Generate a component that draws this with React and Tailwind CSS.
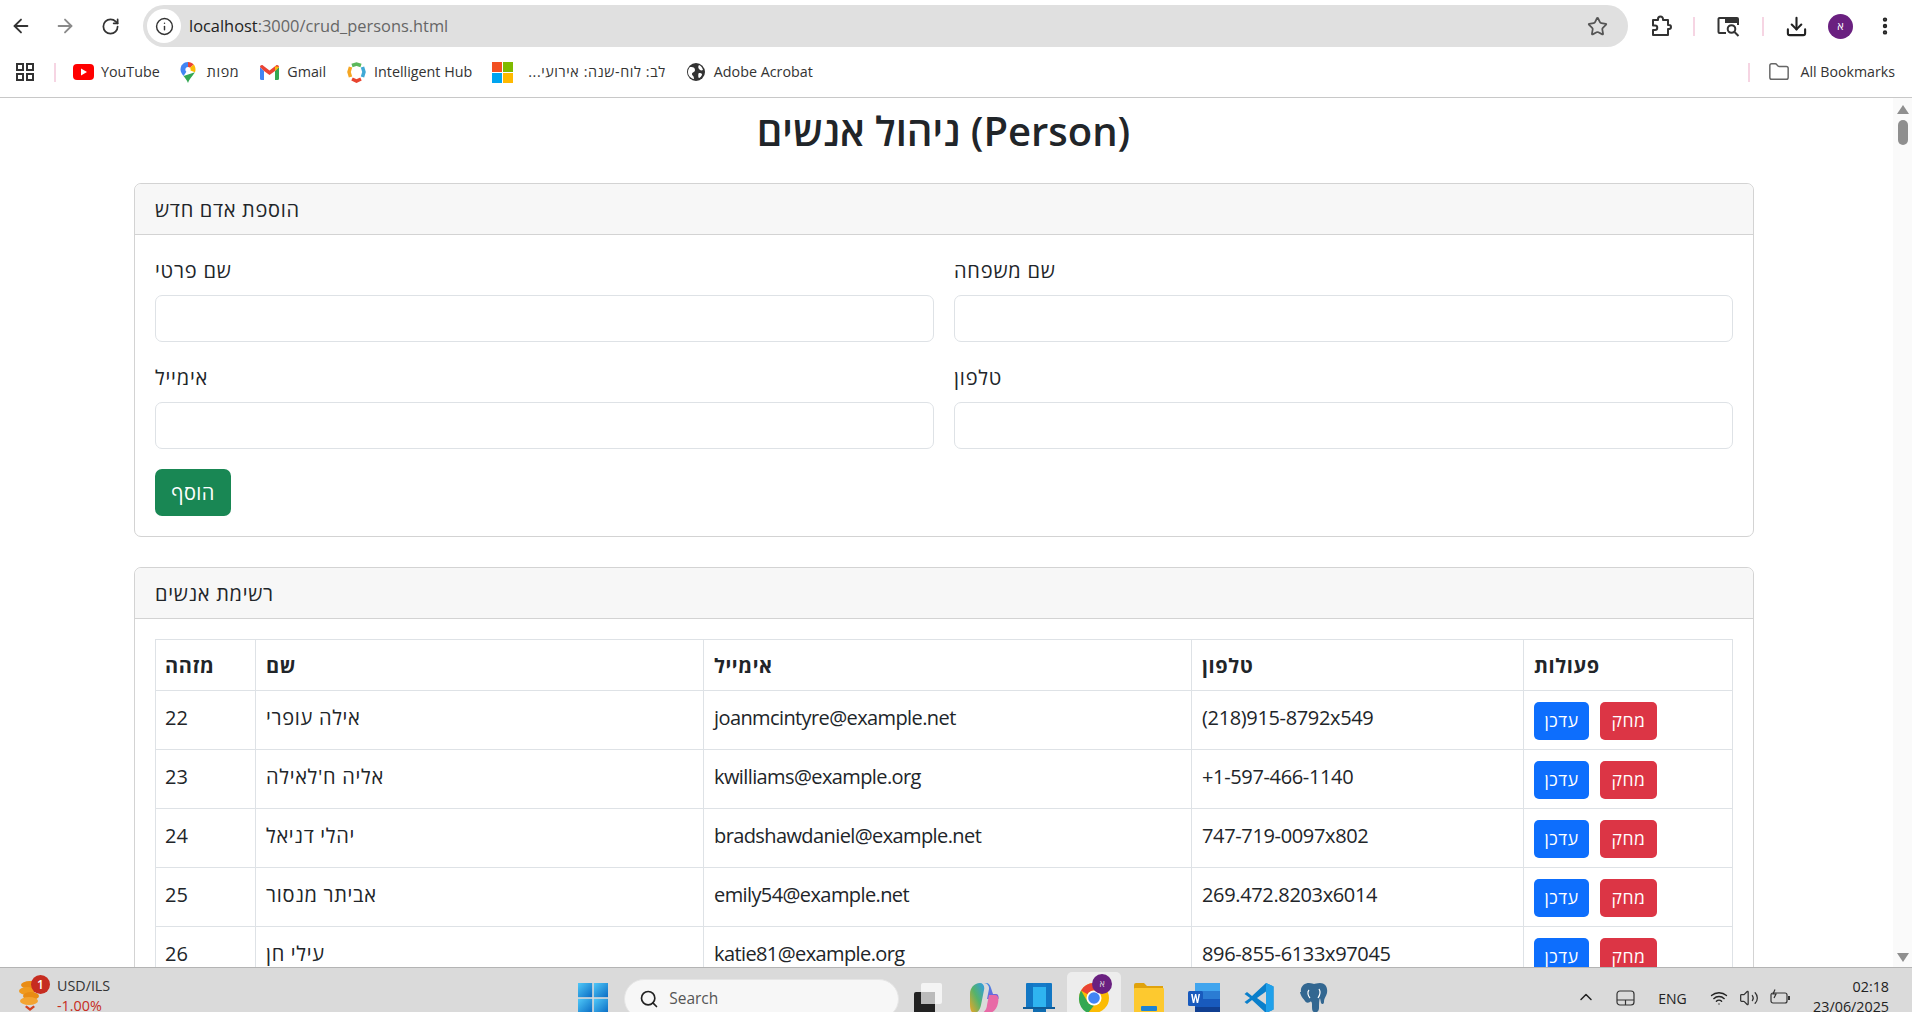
import React from "react";
import { ArrowLeft, ArrowRight, RotateCw, Info, Star, Download, EllipsisVertical, Folder, Search, ChevronUp, Wifi, Volume2 } from "lucide-react";

const FONT = "[font-family:'Open_Sans','Noto_Sans','DejaVu_Sans',sans-serif]";

const people = [
  ["22", "אילה עופרי", "joanmcintyre@example.net", "(218)915-8792x549"],
  ["23", "אליה ח'לאילה", "kwilliams@example.org", "+1-597-466-1140"],
  ["24", "יהלי דניאל", "bradshawdaniel@example.net", "747-719-0097x802"],
  ["25", "אביתר מנסור", "emily54@example.net", "269.472.8203x6014"],
  ["26", "עילי חן", "katie81@example.org", "896-855-6133x97045"],
];

const CELL_STYLE = ["pl-[9px]", "tracking-[0.7px]", "tracking-[-0.6px]", "tracking-[-0.35px]"];

function Divider({ className = "" }) {
  return <div className={`w-[2px] h-[19px] bg-[#f6d5e3] shrink-0 ${className}`} />;
}

function Bookmark({ icon, label, className = "", textClass = "" }) {
  return (
    <div className={`flex items-center shrink-0 ${className}`}>
      {icon}
      <span className={`text-[14.3px] text-[#333] whitespace-nowrap ${textClass}`}>{label}</span>
    </div>
  );
}

const AppsIcon = () => (
  <svg width="20" height="20" viewBox="0 0 20 20" fill="none" stroke="#333" strokeWidth="2"><rect x="2" y="2" width="6" height="6" /><rect x="12" y="2" width="6" height="6" /><rect x="2" y="12" width="6" height="6" /><rect x="12" y="12" width="6" height="6" /></svg>
);
const YouTubeIcon = () => (
  <svg width="21" height="16" viewBox="0 0 21 16"><rect width="21" height="16" rx="4" fill="#f00" /><path d="M8 4.5v7l6-3.5z" fill="#fff" /></svg>
);
const MapsIcon = () => (
  <svg width="16" height="21" viewBox="0 0 16 21"><path d="M8 0C3.6 0 0.5 3.2 0.5 7.5 0.5 10 2 12 3.5 14L8 7.5z" fill="#4285f4" /><path d="M8 0c2.3 0 4.3 1 5.7 2.6L8 7.5z" fill="#ea4335" /><path d="M13.7 2.6c1.1 1.3 1.8 3 1.8 4.9 0 1-.2 1.8-.6 2.7L8 7.5z" fill="#fbbc04" /><path d="M3.5 14L14.9 10.2C13.6 13 10 15.5 8 21 7 18 5 16 3.5 14z" fill="#34a853" /><circle cx="8" cy="7.5" r="2.6" fill="#fff" /></svg>
);
const GmailIcon = () => (
  <svg width="19" height="15" viewBox="0 0 19 15"><path d="M0 2v11.5A1.5 1.5 0 0 0 1.500 15H4V6z" fill="#4285f4" /><path d="M15 6v9h2.500a1.500 1.500 0 0 0 1.500-1.500V2z" fill="#34a853" /><path d="M0 2C0 .5 1.800-.5 3 .5L9.500 5.500 16 .5c1.200-1 3 0 3 1.500L15 6 9.500 10 4 6z" fill="#ea4335" /><path d="M15 1.200 19 2 15 6z" fill="#fbbc04" /></svg>
);
const HubIcon = () => (
  <svg width="19" height="21" viewBox="0 0 19 21" fill="none" strokeWidth="3.500"><path d="M5 3.500 9.500 2 14 3.500" stroke="#5cb85c" /><path d="M15.500 5 17 10 15.500 15" stroke="#3fa9d6" /><path d="M14 17 9.500 19 5 17" stroke="#e8442e" /><path d="M3.500 15 2 10 3.500 5" stroke="#f5a623" /></svg>
);
const MsIcon = () => (
  <svg width="21" height="21" viewBox="0 0 21 21"><rect width="10" height="10" fill="#f25022" /><rect x="11" width="10" height="10" fill="#7fba00" /><rect y="11" width="10" height="10" fill="#00a4ef" /><rect x="11" y="11" width="10" height="10" fill="#ffb900" /></svg>
);
const GlobeDark = () => (
  <svg width="18" height="18" viewBox="0 0 18 18"><circle cx="9" cy="9" r="9" fill="#333" /><path d="M3 4c3-.5 5 .5 5 3S5 9 5 11s2 1 2 5c-3-.5-6-3-6-7 0-2 .8-3.800 2-5zM12 2c2 1 3 2 4 5-2 1-3 0-4-1s-1-3 0-4zM12 10c2 0 3 .5 3 1.500s-2 3.500-3 3.500-1-5 0-5z" fill="#fff" /></svg>
);
const PuzzleIcon = () => (
  <svg width="22" height="22" viewBox="0 0 22 22" fill="none" stroke="#333" strokeWidth="2" strokeLinejoin="round"><path d="M3 5h5V4a2.500 2.500 0 0 1 5 0v1h5v5h1a2 2 0 0 1 0 4h-1v6H3v-5h2a2.200 2.200 0 0 0 0-4.500H3z" /></svg>
);
const TabSearchIcon = () => (
  <svg width="23" height="21" viewBox="0 0 23 21" fill="none" stroke="#333" strokeWidth="2"><path d="M9 2H2.500a1 1 0 0 0-1 1v13a1 1 0 0 0 1 1H9" /><path d="M9 2h11a1 1 0 0 1 1 1v3H9z" fill="#333" /><path d="M21 6v3" /><circle cx="14.500" cy="13" r="3.800" /><path d="M17.500 16 21.500 20" /></svg>
);
const TouchpadIcon = () => (
  <svg width="19" height="16" viewBox="0 0 19 16" fill="none" stroke="#333" strokeWidth="1.200"><rect x="1" y="1" width="17" height="14" rx="3" /><path d="M1 10h17M9.500 10v5" /></svg>
);
const BatteryIcon = () => (
  <svg width="21" height="16" viewBox="0 0 21 16" fill="none" stroke="#333" strokeWidth="1.200"><rect x="1" y="4" width="16" height="10" rx="2" /><path d="M19 7v4" strokeWidth="2" /><path d="M5 0.500 3 5h3L4 9" /></svg>
);
const CoinsIcon = () => (
  <svg width="24" height="34" viewBox="0 0 24 34"><ellipse cx="12" cy="7" rx="9" ry="4" fill="#e98c14" /><ellipse cx="9" cy="13" rx="8" ry="4" fill="#f09a1e" /><ellipse cx="13" cy="18" rx="8" ry="4" fill="#e98c14" /><ellipse cx="11" cy="23" rx="9" ry="4" fill="#f3a431" /><path d="M7 29l5 4 5-4-1.500-1.500L12 30l-3.500-2.500z" fill="#d3401f" /></svg>
);
const WindowsIcon = () => (
  <svg width="30" height="30" viewBox="0 0 30 30"><defs><linearGradient id="w" x1="0" y1="0" x2="1" y2="1"><stop offset="0" stopColor="#4fc8f8" /><stop offset="1" stopColor="#0a6cc4" /></linearGradient></defs><rect x="0" y="0" width="14.200" height="14.200" fill="url(#w)" /><rect x="15.800" y="0" width="14.200" height="14.200" fill="url(#w)" /><rect x="0" y="15.800" width="14.200" height="14.200" fill="url(#w)" /><rect x="15.800" y="15.800" width="14.200" height="14.200" fill="url(#w)" /></svg>
);
const TaskViewIcon = () => (
  <svg width="30" height="32" viewBox="0 0 30 32"><rect x="8" y="1" width="21" height="21" rx="2" fill="#f4f4f4" /><rect x="1" y="10" width="21" height="22" rx="2" fill="#222" /><rect x="8" y="10" width="14" height="12" fill="#bbb" /></svg>
);
const CopilotIcon = () => (
  <svg width="30" height="32" viewBox="0 0 30 32"><defs><linearGradient id="c1" x1="0" y1="0" x2="1" y2="1"><stop offset="0" stopColor="#2f9be8" /><stop offset="1" stopColor="#7f55d8" /></linearGradient><linearGradient id="c2" x1="0" y1="1" x2="1" y2="0"><stop offset="0" stopColor="#f4a522" /><stop offset=".5" stopColor="#55b36a" /><stop offset="1" stopColor="#2f9be8" /></linearGradient></defs><path d="M11 1h6c3 0 4 2 5 5l2 6h3c2 0 3 2 2.500 5L27 17H18l2-10c.5-3-2-6-5-6z" fill="url(#c1)" /><path d="M20 13h6c3 0 4 3 3 8-1 6-5 10-9 10h-8c3 0 6-4 6-8z" fill="#e86aa6" /><path d="M1 12C1 6 5 1 11 1c3 0 5 3 4 7l-3 15c-.7 4-3 8-7 8-3 0-4-4-4-9z" fill="url(#c2)" /></svg>
);
const StoreIcon = () => (
  <svg width="32" height="32" viewBox="0 0 32 32"><rect x="3" y="1" width="26" height="25" rx="1" fill="#1277c4" /><rect x="10" y="1" width="13" height="31" rx="1" fill="#2fb4f0" /><rect x="10" y="1" width="13" height="4" fill="#167bc8" /><rect x="0" y="25" width="32" height="2" fill="#0f5c98" /><rect x="10" y="27" width="13" height="5" fill="#0f6cb0" /></svg>
);
const ChromeIcon = () => (
  <svg width="32" height="32" viewBox="0 0 32 32"><circle cx="16" cy="16" r="15" fill="#fbbc04" /><path d="M16 1a15 15 0 0 1 13 7.500H16a7.500 7.500 0 0 0-6.500 3.750L3 8.500A15 15 0 0 1 16 1z" fill="#ea4335" /><path d="M1 16A15 15 0 0 1 3 8.500l6.500 11.250a7.500 7.500 0 0 0 6.500 3.750L10 31A15 15 0 0 1 1 16z" fill="#34a853" /><circle cx="16" cy="16" r="7.500" fill="#fff" /><circle cx="16" cy="16" r="5.800" fill="#4285f4" /></svg>
);
const FolderApp = () => (
  <svg width="32" height="32" viewBox="0 0 32 32"><path d="M1 3a2 2 0 0 1 2-2h8l3 3h16v6H1z" fill="#e0a20c" /><rect x="1" y="6" width="30" height="26" rx="1" fill="#fdc92f" /><rect x="8" y="24" width="16" height="5" rx="1" fill="#1d83d4" /></svg>
);
const WordIcon = () => (
  <svg width="32" height="32" viewBox="0 0 32 32"><rect x="7" y="1" width="25" height="31" rx="1" fill="#2b7cd3" /><rect x="7" y="1" width="25" height="8" fill="#41a5ee" /><rect x="7" y="17" width="25" height="8" fill="#185abd" /><rect x="7" y="25" width="25" height="7" fill="#103f91" /><rect x="0" y="9" width="15" height="15" rx="1.500" fill="#185abd" /><path d="M3 12l1.800 9h1.500L7.500 15l1.200 6h1.500l1.800-9h-1.500l-1 6-1.200-6H7l-1.300 6-1-6z" fill="#fff" /></svg>
);
const VsCodeIcon = () => (
  <svg width="30" height="32" viewBox="0 0 30 32"><path d="M22 1 29.500 4.500V27.500L22 31 8 18l-5 4-2.500-2 5.500-4-5.500-4L3 10l5 4z" fill="#0a7fcb" /><path d="M22 1 29.500 4.500V27.500L22 31z" fill="#1fa0ea" /><path d="M22 9.500 13 16l9 6.500z" fill="#d8d8d8" /></svg>
);
const PostgresIcon = () => (
  <svg width="30" height="32" viewBox="0 0 30 32"><path d="M2 10C1 4 6 1 10 1c3 0 4 1 5 1s3-1 6-1c5 0 8 4 7 10-1 4-3 5-3 9 0 2-2 3-3 1l-1-5c-1 2-1 6-1 10 0 3-2 5-5 4-2-.5-2-3-2-8 0-2-1-3-2-2-2 1-4 1-5-1-2-3-4-4-5-9z" fill="#336791" /><path d="M10 8c-2 2-1 6 1 8M20 7c2 3 1 6-1 9" stroke="#fff" strokeWidth="1.200" fill="none" /></svg>
);

function Panel({ title, children, className = "" }) {
  return (
    <section className={`ml-[134px] mr-[139px] border border-[#d3d3d3] rounded-[7px] bg-white ${className}`}>
      <div className="h-[51px] px-[20px] pt-[2px] flex items-center bg-[#f7f7f7] border-b border-[#d3d3d3] rounded-t-[7px] text-[20px] tracking-[0.7px] text-[#212529]">
        {title}
      </div>
      {children}
    </section>
  );
}

function Field({ label }) {
  return (
    <div>
      <div className="h-[30px] leading-[32px] mb-[10px] text-[20px] tracking-[0.8px] text-[#212529]">{label}</div>
      <input className="block w-full h-[47px] border border-[#dee2e6] rounded-[7px] bg-white" />
    </div>
  );
}

export default function App() {
  return (
    <div className={`h-[1012px] w-[1912px] overflow-hidden flex flex-col bg-white text-[#212529] ${FONT}`}>
      <header className="h-[98px] shrink-0 border-b border-[#c8c8c8] bg-white">
        <div className="h-[50px] flex items-center pt-[2px]">
          <ArrowLeft className="ml-[10px] shrink-0" size={22} color="#333" strokeWidth={2} />
          <ArrowRight className="ml-[22px] shrink-0" size={22} color="#8a8a8a" strokeWidth={2} />
          <RotateCw className="ml-[25px] shrink-0" size={19} color="#333" strokeWidth={2.200} />
          <div className="ml-[23px] w-[1485px] h-[42px] rounded-full bg-[#e0e0e0] flex items-center pl-[4px] pr-[20px] shrink-0">
            <div className="w-[34px] h-[34px] rounded-full bg-white flex items-center justify-center shrink-0">
              <Info size={19} color="#333" strokeWidth={1.800} />
            </div>
            <div className="ml-[8px] text-[16.400px] flex-1 whitespace-nowrap">
              <span className="text-[#222]">localhost</span><span className="text-[#666]">:3000/crud_persons.html</span>
            </div>
            <Star size={21} color="#555" strokeWidth={2} />
          </div>
          <div className="ml-[22px] shrink-0"><PuzzleIcon /></div>
          <Divider className="ml-[21px]" />
          <div className="ml-[22px] shrink-0"><TabSearchIcon /></div>
          <Divider className="ml-[22px]" />
          <Download className="ml-[21px] shrink-0" size={23} color="#222" strokeWidth={2.200} />
          <div className="ml-[20px] w-[25px] h-[25px] rounded-full bg-[#6a2080] text-white text-[11px] flex items-center justify-center shrink-0">א</div>
          <EllipsisVertical className="ml-[21px] shrink-0" size={22} color="#222" strokeWidth={2.800} />
        </div>
        <div className="h-[47px] flex items-center pb-[3px]">
          <div className="ml-[15px] shrink-0"><AppsIcon /></div>
          <Divider className="ml-[19px]" />
          <Bookmark className="ml-[17px] gap-[7px]" icon={<YouTubeIcon />} label="YouTube" />
          <Bookmark className="ml-[20px] gap-[11px]" icon={<MapsIcon />} label="מפות" textClass="tracking-[0.6px]" />
          <Bookmark className="ml-[21px] gap-[8px]" icon={<GmailIcon />} label="Gmail" />
          <Bookmark className="ml-[21px] gap-[8px]" icon={<HubIcon />} label="Intelligent Hub" />
          <Bookmark className="ml-[20px] gap-[15px]" icon={<MsIcon />} label={<span dir="rtl">לב: לוח-שנה: אירועי...</span>} textClass="tracking-[0.6px]" />
          <Bookmark className="ml-[21px] gap-[9px]" icon={<GlobeDark />} label="Adobe Acrobat" />
          <Divider className="ml-auto" />
          <Folder className="ml-[18px] shrink-0" size={22} color="#666" strokeWidth={1.600} />
          <span className="ml-[10px] mr-[17px] text-[14.200px] whitespace-nowrap text-[#333]">All Bookmarks</span>
        </div>
      </header>

      <div className="flex-1 min-h-0 flex overflow-hidden">
        <main className="flex-1 min-w-0 overflow-hidden">
          <h1 className="text-[40px] leading-[48px] font-semibold text-center mt-[9px] mb-[28px] pr-[6px]">ניהול אנשים (Person)</h1>
          <Panel title="הוספת אדם חדש">
            <div className="p-[20px]">
              <div className="grid grid-cols-2 gap-x-[20px] gap-y-[20px]">
                <Field label="שם פרטי" />
                <Field label="שם משפחה" />
                <Field label="אימייל" />
                <Field label="טלפון" />
              </div>
              <button className="mt-[20px] h-[47px] w-[76px] rounded-[7px] bg-[#198754] text-white text-[20px] tracking-[0.4px] flex items-center justify-center">הוסף</button>
            </div>
          </Panel>
          <Panel title="רשימת אנשים" className="mt-[30px]">
            <div className="p-[20px]">
              <table className="w-full table-fixed border-collapse text-[20px] text-[#212529]">
                <colgroup>
                  <col className="w-[100px]" />
                  <col className="w-[448px]" />
                  <col className="w-[488px]" />
                  <col className="w-[332px]" />
                  <col />
                </colgroup>
                <thead>
                  <tr className="h-[51px]">
                    {["מזהה", "שם", "אימייל", "טלפון", "פעולות"].map((h, i) => (
                      <th key={h} className={`border border-[#dee2e6] px-[10px] pt-[2px] text-left font-bold tracking-[0.6px] ${i === 0 ? "pl-[9px]" : ""}`}>{h}</th>
                    ))}
                  </tr>
                </thead>
                <tbody>
                  {people.map((p) => (
                    <tr key={p[0]} className="h-[59px]">
                      {p.map((c, i) => (
                        <td key={i} className={`border border-[#dee2e6] px-[10px] pb-[4px] whitespace-nowrap ${CELL_STYLE[i]}`}>{c}</td>
                      ))}
                      <td className="border border-[#dee2e6] px-[10px]">
                        <div className="flex gap-[11px] pt-[1px]">
                          <button className="h-[38px] w-[55px] rounded-[5px] bg-[#0d6efd] text-white text-[17.500px] tracking-[0.5px] flex items-center justify-center">עדכן</button>
                          <button className="h-[38px] w-[57px] rounded-[5px] bg-[#dc3545] text-white text-[17.500px] tracking-[0.5px] flex items-center justify-center">מחק</button>
                        </div>
                      </td>
                    </tr>
                  ))}
                </tbody>
              </table>
            </div>
          </Panel>
        </main>
        <aside className="w-[19px] shrink-0 bg-[#fafafa] flex flex-col items-center justify-between pt-[7px] pb-[5px]">
          <div className="flex flex-col items-center">
            <div className="w-0 h-0 border-l-[6px] border-r-[6px] border-b-[9px] border-l-transparent border-r-transparent border-b-[#8f8f8f]" />
            <div className="mt-[6px] w-[10px] h-[25px] rounded-full bg-[#8f8f8f]" />
          </div>
          <div className="w-0 h-0 border-l-[6px] border-r-[6px] border-t-[9px] border-l-transparent border-r-transparent border-t-[#8f8f8f]" />
        </aside>
      </div>

      <footer className="h-[45px] shrink-0 border-t border-[#b4b4b4] bg-[#dadada] flex items-start overflow-hidden">
        <div className="relative ml-[18px] mt-[10px] shrink-0">
          <CoinsIcon />
          <div className="absolute left-[13px] -top-[3px] w-[19px] h-[19px] rounded-full bg-[#c62c20] text-white text-[12px] font-semibold flex items-center justify-center">1</div>
        </div>
        <div className="ml-[15px] mt-[8px] text-[14.300px] leading-[20px] shrink-0">
          <div className="text-[#333]">USD/ILS</div>
          <div className="text-[#c62c20]">-1.00%</div>
        </div>
        <div className="ml-[468px] mt-[15px] shrink-0"><WindowsIcon /></div>
        <div className="ml-[16px] mt-[11px] w-[275px] h-[40px] rounded-full bg-[#f7f7f7] border border-[#e6e6e6] flex items-center pl-[14px] shrink-0">
          <Search size={20} color="#222" strokeWidth={2} />
          <span className="ml-[10px] text-[15.500px] text-[#555]">Search</span>
        </div>
        <div className="ml-[14px] mt-[14px] shrink-0"><TaskViewIcon /></div>
        <div className="ml-[26px] mt-[14px] shrink-0"><CopilotIcon /></div>
        <div className="ml-[24px] mt-[14px] shrink-0"><StoreIcon /></div>
        <div className="relative ml-[12px] mt-[4px] w-[54px] h-[50px] rounded-t-[5px] bg-[#ededed] flex justify-center pt-[10px] shrink-0">
          <ChromeIcon />
          <div className="absolute left-[25px] top-[2px] w-[20px] h-[20px] rounded-full bg-[#6a2080] text-[#ddd] text-[9px] flex items-center justify-center">א</div>
        </div>
        <div className="ml-[12px] mt-[14px] shrink-0"><FolderApp /></div>
        <div className="ml-[23px] mt-[14px] shrink-0"><WordIcon /></div>
        <div className="ml-[24px] mt-[14px] shrink-0"><VsCodeIcon /></div>
        <div className="ml-[25px] mt-[14px] shrink-0"><PostgresIcon /></div>
        <ChevronUp className="ml-[247px] mt-[19px] shrink-0" size={20} color="#222" strokeWidth={1.800} />
        <div className="ml-[20px] mt-[22px] shrink-0"><TouchpadIcon /></div>
        <div className="ml-[23px] mt-[20px] text-[14px] text-[#222] shrink-0">ENG</div>
        <Wifi className="ml-[23px] mt-[21px] shrink-0" size={18} color="#222" strokeWidth={1.800} />
        <Volume2 className="ml-[11px] mt-[20px] shrink-0" size={20} color="#333" strokeWidth={1.500} />
        <div className="ml-[11px] mt-[21px] shrink-0"><BatteryIcon /></div>
        <div className="ml-auto mr-[23px] mt-[9px] text-[14.300px] leading-[20px] text-right text-[#222] shrink-0">
          <div>02:18</div>
          <div>23/06/2025</div>
        </div>
      </footer>
    </div>
  );
}
